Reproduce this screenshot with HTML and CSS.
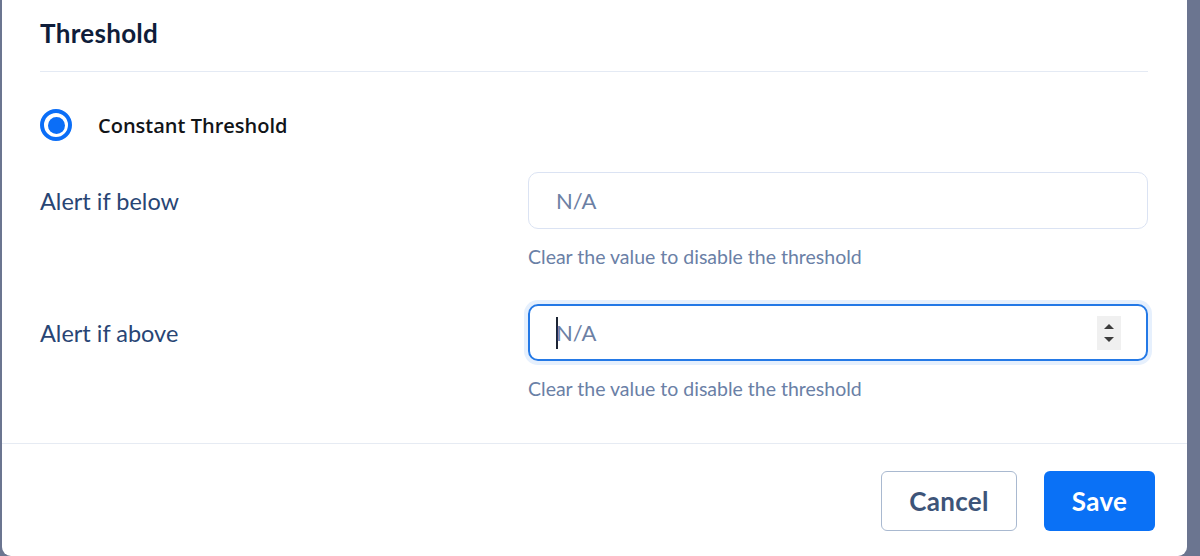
FILE: index.html
```html
<!DOCTYPE html>
<html lang="en">
<head>
<meta charset="utf-8">
<title>Threshold</title>
<link rel="stylesheet" href="styles.css">
</head>
<body>
<div class="modal">
  <div class="content">
    <h2 class="title">Threshold</h2>
    <label class="radio-row">
      <span class="radio"><span class="radio-dot"></span></span>
      <span class="radio-label">Constant Threshold</span>
    </label>
    <div class="fields">
      <div class="field-label">Alert if below</div>
      <div class="field-control">
        <div class="input"><span class="placeholder">N/A</span></div>
        <div class="help">Clear the value to disable the threshold</div>
      </div>
      <div class="field-label">Alert if above</div>
      <div class="field-control">
        <div class="input focused">
          <span class="caret"></span><span class="placeholder">N/A</span>
          <span class="spinner">
            <svg width="24" height="34" viewBox="0 0 24 34"><path d="M7 13 L12 8 L17 13 Z" fill="#3c3c3c"/><path d="M7 21 L17 21 L12 26 Z" fill="#3c3c3c"/></svg>
          </span>
        </div>
        <div class="help">Clear the value to disable the threshold</div>
      </div>
    </div>
  </div>
  <div class="footer">
    <button class="btn btn-cancel">Cancel</button>
    <button class="btn btn-save">Save</button>
  </div>
</div>
</body>
</html>
```

FILE: styles.css
```css
html, body {
  margin: 0;
  padding: 0;
  background: #6b7590;
  height: 556px;
  overflow: hidden;
}
.modal {
  margin-left: 2px;
  width: 1185px;
  height: 556px;
  background: #ffffff;
  border-radius: 0 0 9px 9px;
  box-sizing: border-box;
  display: flex;
  flex-direction: column;
}
.content {
  padding: 0 39px 0 38px;
}
.title {
  margin: 0;
  padding: 17px 0 22px;
  border-bottom: 1px solid #e4eaf4;
  font-family: "Lato", "Liberation Sans", sans-serif;
  font-weight: 700;
  font-size: 26px;
  line-height: 32px;
  color: #0f1d3a;
  letter-spacing: 0.3px;
}
.radio-row {
  display: flex;
  align-items: center;
  gap: 26px;
  margin-top: 37px;
  height: 32px;
}
.radio {
  width: 32px;
  height: 32px;
  box-sizing: border-box;
  border: 4px solid #0b6ef7;
  border-radius: 50%;
  display: flex;
  align-items: center;
  justify-content: center;
}
.radio-dot {
  width: 17px;
  height: 17px;
  border-radius: 50%;
  background: #0b6ef7;
}
.radio-label {
  font-family: "Open Sans", "Noto Sans", sans-serif;
  font-weight: 600;
  font-size: 20px;
  color: #111418;
}
.fields {
  display: grid;
  grid-template-columns: 488px 1fr;
  row-gap: 35px;
  margin-top: 31px;
  padding-bottom: 42px;
}
.field-label {
  font-family: "Lato", "Liberation Sans", sans-serif;
  font-size: 23.5px;
  color: #284574;
  height: 57px;
  display: flex;
  align-items: center;
}
.field-control {
  display: flex;
  flex-direction: column;
  gap: 16px;
}
.input {
  position: relative;
  height: 57px;
  box-sizing: border-box;
  border: 1.5px solid #dbe3f3;
  border-radius: 10px;
  display: flex;
  align-items: center;
  padding-left: 27px;
  font-family: "Lato", "Liberation Sans", sans-serif;
  font-size: 22px;
}
.input.focused {
  border: 2px solid #2479e6;
  box-shadow: 0 0 0 4px #e6f0fd;
  padding-left: 26px;
}
.placeholder {
  color: #6c80a4;
}
.caret {
  width: 2px;
  height: 32px;
  background: #1c2433;
  margin-right: -2px;
}
.spinner {
  position: absolute;
  right: 25px;
  top: 10px;
  width: 24px;
  height: 34px;
  background: #f0f0f0;
  display: block;
}
.spinner svg {
  display: block;
}
.help {
  font-family: "Lato", "Liberation Sans", sans-serif;
  font-size: 19.5px;
  line-height: 24px;
  color: #6a80a6;
}
.footer {
  border-top: 1px solid #e6ebf3;
  display: flex;
  justify-content: flex-end;
  gap: 27px;
  padding: 27px 32px 0 0;
}
.btn {
  height: 60px;
  border-radius: 6px;
  font-family: "Lato", "Liberation Sans", sans-serif;
  font-weight: 700;
  font-size: 26px;
  cursor: pointer;
  box-sizing: border-box;
  letter-spacing: 0.3px;
}
.btn-cancel {
  width: 136px;
  background: #ffffff;
  border: 1.5px solid #a9b9d0;
  color: #3d5479;
}
.btn-save {
  width: 111px;
  background: #0a71f6;
  border: none;
  color: #ffffff;
}
```
